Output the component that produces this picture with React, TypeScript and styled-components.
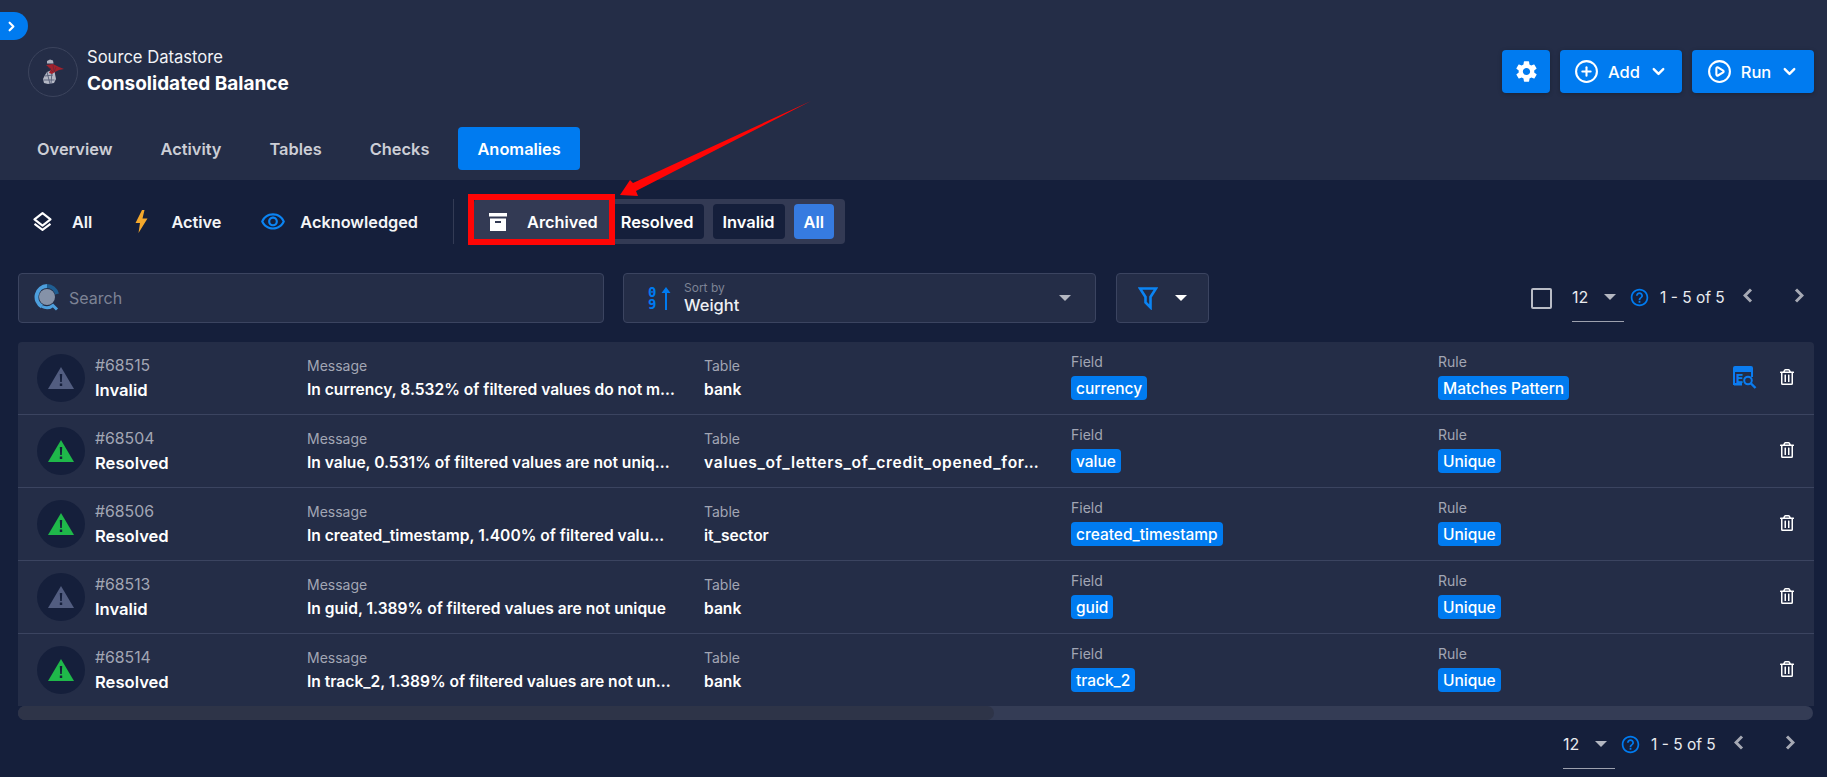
import styled, { createGlobalStyle } from 'styled-components'
import { ChevronDown, ChevronRight, CirclePlay, CirclePlus } from 'lucide-react'
import { FaRegTrashAlt } from 'react-icons/fa'
import { IoMdSettings } from 'react-icons/io'
import { MdOutlineHelpOutline, MdOutlineVisibility } from 'react-icons/md'

const GlobalStyle = createGlobalStyle`
  html, body {
    margin: 0;
    padding: 0;
    background: #151f3b;
    font-family: 'Inter', 'Noto Sans', sans-serif;
    color: #fff;
  }
  * {
    box-sizing: border-box;
  }
`

const SPage = styled.div`
  width: 1827px;
  height: 777px;
  position: relative;
  overflow: hidden;
  background: #151f3b;
`
const SHeader = styled.header`
  height: 180px;
  background: #242d47;
  padding: 12px 13px 0 0;
`
const SToggle = styled.div`
  width: 28px;
  height: 28px;
  background: #007bf0;
  border-radius: 0 14px 14px 0;
  display: flex;
  align-items: center;
  justify-content: center;
  padding-right: 5px;
  color: #fff;
`
const SHeaderTop = styled.div`
  display: flex;
  justify-content: space-between;
  padding-left: 28px;
  margin-top: 7px;
  height: 50px;
`
const SDatastore = styled.div`
  display: flex;
  align-items: center;
  gap: 9px;
`
const SLogo = styled.div`
  width: 50px;
  height: 50px;
  border-radius: 50%;
  border: 1px solid #3c445d;
  display: flex;
  align-items: center;
  justify-content: center;
`
const SSubTitle = styled.div`
  font-size: 16.6px;
  line-height: 20px;
  margin-top: -1px;
  color: #f2f3f6;
`
const STitle = styled.div`
  font-size: 19px;
  line-height: 24px;
  margin-top: 5px;
  font-weight: 700;
`
const SActions = styled.div`
  display: flex;
  gap: 10px;
  margin-top: 3px;
`
const SBlueButton = styled.button<{ $wide?: boolean }>`
  width: ${(p) => (p.$wide ? '122px' : '48px')};
  height: 43px;
  border: 0;
  border-radius: 4px;
  background: #007bf0;
  color: #fff;
  font: 500 16.5px 'Inter', sans-serif;
  display: flex;
  align-items: center;
  justify-content: center;
  gap: 9px;
  padding: 0;
  box-shadow: 0 1px 4px rgba(0, 0, 0, 0.25);
`
const STabs = styled.nav`
  display: flex;
  gap: 10px;
  padding-left: 18px;
  margin-top: 30px;
`
const STab = styled.div<{ $active?: boolean }>`
  height: 43px;
  padding: 0 19px;
  border-radius: 4px;
  display: flex;
  align-items: center;
  font-size: 16.4px;
  font-weight: 600;
  background: ${(p) => (p.$active ? '#007bf0' : 'transparent')};
  color: ${(p) => (p.$active ? '#fff' : '#ccced6')};
`
const SFilterBar = styled.div`
  display: flex;
  align-items: center;
  height: 45px;
  margin-top: 19px;
  padding-left: 33px;
`
const SStateItem = styled.div<{ $after?: number }>`
  display: flex;
  align-items: center;
  font-size: 16.3px;
  font-weight: 600;
  color: #f4f5f7;
  margin-right: ${(p) => p.$after ?? 0}px;
`
const SIconSlot = styled.span<{ $w: number }>`
  width: ${(p) => p.$w}px;
  display: flex;
  align-items: center;
`
const SDivider = styled.div`
  width: 1px;
  height: 45px;
  background: #333b55;
  margin: 0 20px 0 35px;
`
const SGroup = styled.div`
  height: 45px;
  width: 371px;
  padding: 5px 11px 5px 0;
  background: #333a54;
  border-radius: 4px;
  display: flex;
  align-items: center;
  gap: 9px;
`
const SArchived = styled.div`
  width: 136px;
  height: 41px;
  display: flex;
  align-items: center;
  padding-left: 15px;
  font-size: 16.3px;
  font-weight: 600;
  gap: 20px;
  margin-right: -6px;
`
const SStatusTab = styled.div<{ $active?: boolean }>`
  height: 35px;
  padding: 0 10px;
  border-radius: 4px;
  background: ${(p) => (p.$active ? '#367be0' : '#151f3b')};
  display: flex;
  align-items: center;
  font-size: 16.4px;
  font-weight: 600;
`
const SHighlight = styled.div`
  position: absolute;
  left: 468px;
  top: 194px;
  width: 147px;
  height: 51px;
  border: 6px solid #ff0505;
`
const SArrow = styled.svg`
  position: absolute;
  left: 610px;
  top: 95px;
`
const SToolbar = styled.div`
  display: flex;
  align-items: flex-start;
  margin-top: 29px;
  padding-left: 18px;
  height: 50px;
`
const SBox = styled.div<{ $w: number }>`
  width: ${(p) => p.$w}px;
  height: 50px;
  background: #242d47;
  border: 1px solid #3b4460;
  border-radius: 4px;
  display: flex;
  align-items: center;
`
const SSearch = styled(SBox)`
  padding-left: 15px;
  gap: 9px;
  font-size: 16px;
  color: #7d8395;
  margin-right: 19px;
`
const SSort = styled(SBox)`
  padding: 0 24px 0 24px;
  margin-right: 20px;
`
const SSortDigits = styled.span`
  display: flex;
  flex-direction: column;
  font: 700 14px/12px 'DejaVu Sans Mono', monospace;
  color: #007bf0;
  width: 10px;
`
const SSortArrow = styled.svg`
  margin-left: 3px;
`
const SSortText = styled.div`
  flex: 1;
  margin-left: 13px;
`
const SSortLabel = styled.div`
  font-size: 12px;
  line-height: 14px;
  color: #7d8395;
`
const SSortValue = styled.div`
  font-size: 16.5px;
  line-height: 20px;
  font-weight: 500;
  color: #eef0f4;
`
const SCaret = styled.span<{ $color?: string }>`
  width: 0;
  height: 0;
  border-left: 6px solid transparent;
  border-right: 6px solid transparent;
  border-top: 6px solid ${(p) => p.$color ?? '#b4b7c1'};
`
const SFilterBox = styled(SBox)`
  justify-content: center;
  gap: 17px;
`
const SPager = styled.div<{ $bottom?: boolean }>`
  display: flex;
  align-items: center;
  height: 49px;
  margin-left: auto;
  padding-right: ${(p) => (p.$bottom ? '32px' : '23px')};
  font-size: 16px;
  color: #e9ebef;
`
const SCheckbox = styled.span`
  width: 21px;
  height: 21px;
  border: 2px solid #b9bcc6;
  border-radius: 2px;
  margin-right: 20px;
  margin-top: 1px;
`
const SPageSize = styled.div`
  width: 52px;
  height: 49px;
  display: flex;
  align-items: center;
  justify-content: space-between;
  padding-right: 8px;
  border-bottom: 1px solid #9da1ae;
`
const SHelp = styled.span`
  display: flex;
  color: #007bf0;
  margin: 0 10px 0 5px;
`
const SPageText = styled.span`
  width: 64px;
  white-space: nowrap;
  font-size: 15.5px;
`
const SPageNav = styled.div`
  display: flex;
  gap: 41px;
  margin-left: 19px;
  margin-top: -4px;
`
const SCard = styled.section`
  margin: 19px 13px 0 18px;
  background: #242d47;
  border-radius: 4px 4px 0 0;
`
const SRow = styled.div`
  height: 73px;
  display: grid;
  grid-template-columns: 270px 397px 367px 367px 200px 1fr;
  align-items: center;
  padding-left: 19px;
  border-bottom: 1px solid #3b4460;
  &:last-child {
    height: 72px;
    border-bottom: 0;
  }
`
const SStatusCell = styled.div`
  display: flex;
  align-items: center;
  gap: 10px;
`
const SStatusBadge = styled.div`
  width: 48px;
  height: 48px;
  border-radius: 50%;
  background: #151f3b;
  display: flex;
  align-items: center;
  justify-content: center;
`
const SCell = styled.div`
  min-width: 0;
`
const SLabel = styled.div<{ $big?: boolean }>`
  font-size: ${(p) => (p.$big ? '15.8px' : '14px')};
  line-height: 18px;
  color: #a2a6b4;
`
const SValue = styled.div<{ $big?: boolean; $track?: number }>`
  font-size: ${(p) => (p.$big ? '16.6px' : '15.6px')};
  line-height: 20px;
  font-weight: 600;
  margin-top: 5px;
  color: #fff;
  letter-spacing: ${(p) => p.$track ?? 0}px;
  white-space: nowrap;
`
const STag = styled.div`
  display: flex;
  width: fit-content;
  align-items: center;
  height: 24px;
  padding: 0 5px;
  border-radius: 4px;
  background: #007bf0;
  font-size: 15.5px;
  font-weight: 500;
  color: #fff;
  margin: 5px 0 3px;
`
const SRowActions = styled.div`
  display: flex;
  align-items: center;
  justify-content: flex-end;
  gap: 22px;
  padding-right: 19px;
  margin-top: -2px;
  color: #fff;
`
const SScrollbar = styled.div`
  margin: 0 14px 0 18px;
  height: 14px;
  border-radius: 7px;
  background: #343c55;
`
const SScrollThumb = styled.div`
  width: 976px;
  height: 14px;
  border-radius: 7px;
  background: #2e3448;
`
const SFooter = styled.div`
  display: flex;
  height: 50px;
`

const SqlServerLogo = () => (
  <svg width="22" height="26" viewBox="0 0 22 26">
    <path d="M5 2l3-1.5 3 1 .5 3H5z" fill="#aeb2bf" />
    <path d="M5 13l7-3 1 5 1 5-2 4-6 1-4-1-1-4 2-4z" fill="#b4b8c5" />
    <path d="M3 17l8-1M1.500 21l11 0M5 13l3 12M10 12l-1 13" stroke="#555c76" strokeWidth="0.9" />
    <path d="M4 6l7-1 6 3 5 2-5 1-4 2-3 2-3-1 2-4z" fill="#a3212c" />
    <path d="M6 8l5 5M11 6l1 6M14 8l-2 5" stroke="#5a2a3c" strokeWidth="0.6" />
  </svg>
)

const LayersIcon = () => (
  <svg width="19" height="19" viewBox="0 0 19 19" fill="none" stroke="#fff" strokeWidth="2.1" strokeLinejoin="round">
    <path d="M9.500 1.200l8 6.200-8 6.200-8-6.200z" />
    <path d="M1.500 11.800l8 6 8-6" />
  </svg>
)

const BoltIcon = () => (
  <svg width="13" height="23" viewBox="0 0 13 23">
    <path d="M7 0L.5 13H5L3.500 23 12.500 8.500H7.500L9.500 0z" fill="#f4a82c" />
  </svg>
)

const ArchiveIcon = () => (
  <svg width="18" height="18" viewBox="0 0 18 18">
    <path d="M0 0h18v3.500H0z" fill="#fff" />
    <path d="M1 5.500h16V18H1zM6 8v2h6V8z" fill="#fff" fillRule="evenodd" />
  </svg>
)

const SearchIcon = () => (
  <svg width="26" height="30" viewBox="0 0 26 30" fill="none">
    <circle cx="13" cy="14" r="8" fill="#8592a8" />
    <path d="M8 23.500A11 11 0 0 1 13 3" stroke="#4d9fdd" strokeWidth="4" />
    <path d="M13 3a11 11 0 0 1 10 8" stroke="#1f5e92" strokeWidth="4" />
    <path d="M8 23.500c4 2 8 1.500 11-1l4 4" stroke="#4d9fdd" strokeWidth="3" />
  </svg>
)

const FunnelIcon = () => (
  <svg width="20" height="23" viewBox="0 0 20 23" fill="none" stroke="#0b84f3" strokeWidth="2.6" strokeLinejoin="miter">
    <path d="M2 1.500h16l-5.500 8.500v10.500l-5-5V10z" />
  </svg>
)

const WarningIcon = ({ color }: { color: string }) => (
  <svg width="26" height="22" viewBox="0 0 26 22">
    <path d="M13 0l13 22H0z" fill={color} />
    <path d="M11.800 7h2.400l-.4 8h-1.600zM11.800 16.500h2.400V19h-2.400z" fill="#151f3b" />
  </svg>
)

const EqSearchIcon = () => (
  <svg width="24" height="23" viewBox="0 0 24 23" fill="none">
    <path d="M1 19V2a1 1 0 0 1 1-1h16a1 1 0 0 1 1 1v9" stroke="#0b7cf0" strokeWidth="2" />
    <path d="M1 1h18v5H1zM1 17h8v2.500H1z" fill="#0b7cf0" />
    <text x="3" y="17" fontSize="12" fontWeight="800" fontFamily="Inter, sans-serif" fill="#0b7cf0">
      E
    </text>
    <circle cx="15" cy="14.500" r="3.800" fill="#242d47" stroke="#0b7cf0" strokeWidth="2" />
    <path d="M18 17.500l4.500 4.500" stroke="#0b7cf0" strokeWidth="2.400" />
  </svg>
)

const PageChevron = ({ flip }: { flip?: boolean }) => (
  <svg width="10" height="15" viewBox="0 0 10 15" fill="none" stroke="#a6a9b4" strokeWidth="3">
    <path d={flip ? 'M2 1.500l6 6-6 6' : 'M8 1.500l-6 6 6 6'} />
  </svg>
)

const rows = [
  { id: '#68515', status: 'Invalid', message: 'In currency, 8.532% of filtered values do not m…', table: 'bank', field: 'currency', rule: 'Matches Pattern', eq: true },
  { id: '#68504', status: 'Resolved', message: 'In value, 0.531% of filtered values are not uniq…', table: 'values_of_letters_of_credit_opened_for…', field: 'value', rule: 'Unique', track: 0.7 },
  { id: '#68506', status: 'Resolved', message: 'In created_timestamp, 1.400% of filtered valu…', table: 'it_sector', field: 'created_timestamp', rule: 'Unique' },
  { id: '#68513', status: 'Invalid', message: 'In guid, 1.389% of filtered values are not unique', table: 'bank', field: 'guid', rule: 'Unique' },
  { id: '#68514', status: 'Resolved', message: 'In track_2, 1.389% of filtered values are not un…', table: 'bank', field: 'track_2', rule: 'Unique' },
]

const Pager = ({ bottom }: { bottom?: boolean }) => (
  <SPager $bottom={bottom}>
    {!bottom && <SCheckbox />}
    <SPageSize>
      12
      <SCaret />
    </SPageSize>
    <SHelp>
      <MdOutlineHelpOutline size={21} />
    </SHelp>
    <SPageText>1 - 5 of 5</SPageText>
    <SPageNav>
      <PageChevron />
      <PageChevron flip />
    </SPageNav>
  </SPager>
)

const App = () => {
  return (
    <SPage>
      <GlobalStyle />
      <SHeader>
        <SToggle>
          <ChevronRight size={15} strokeWidth={3.5} />
        </SToggle>
        <SHeaderTop>
          <SDatastore>
            <SLogo>
              <SqlServerLogo />
            </SLogo>
            <div>
              <SSubTitle>Source Datastore</SSubTitle>
              <STitle>Consolidated Balance</STitle>
            </div>
          </SDatastore>
          <SActions>
            <SBlueButton>
              <IoMdSettings size={25} />
            </SBlueButton>
            <SBlueButton $wide>
              <CirclePlus size={25} />
              Add
              <ChevronDown size={19} strokeWidth={3} />
            </SBlueButton>
            <SBlueButton $wide>
              <CirclePlay size={25} />
              Run
              <ChevronDown size={19} strokeWidth={3} />
            </SBlueButton>
          </SActions>
        </SHeaderTop>
        <STabs>
          <STab>Overview</STab>
          <STab>Activity</STab>
          <STab>Tables</STab>
          <STab>Checks</STab>
          <STab $active>Anomalies</STab>
        </STabs>
      </SHeader>

      <SFilterBar>
        <SStateItem $after={43}>
          <SIconSlot $w={39}>
            <LayersIcon />
          </SIconSlot>
          All
        </SStateItem>
        <SStateItem $after={39}>
          <SIconSlot $w={36}>
            <BoltIcon />
          </SIconSlot>
          Active
        </SStateItem>
        <SStateItem>
          <SIconSlot $w={40}>
            <MdOutlineVisibility size={26} color="#0b84f3" />
          </SIconSlot>
          Acknowledged
        </SStateItem>
        <SDivider />
        <SGroup>
          <SArchived>
            <ArchiveIcon />
            Archived
          </SArchived>
          <SStatusTab>Resolved</SStatusTab>
          <SStatusTab>Invalid</SStatusTab>
          <SStatusTab $active>All</SStatusTab>
        </SGroup>
      </SFilterBar>

      <SToolbar>
        <SSearch $w={586}>
          <SearchIcon />
          Search
        </SSearch>
        <SSort $w={473}>
          <SSortDigits>
            <span>0</span>
            <span>9</span>
          </SSortDigits>
          <SSortArrow width="10" height="23" viewBox="0 0 10 23">
            <path d="M5 0l4.500 6H6v17H4V6H.5z" fill="#007bf0" />
          </SSortArrow>
          <SSortText>
            <SSortLabel>Sort by</SSortLabel>
            <SSortValue>Weight</SSortValue>
          </SSortText>
          <SCaret />
        </SSort>
        <SFilterBox $w={93}>
          <FunnelIcon />
          <SCaret $color="#fff" />
        </SFilterBox>
        <Pager />
      </SToolbar>

      <SCard>
        {rows.map((r) => (
          <SRow key={r.id}>
            <SStatusCell>
              <SStatusBadge>
                <WarningIcon color={r.status === 'Invalid' ? '#525d80' : '#1fb84a'} />
              </SStatusBadge>
              <SCell>
                <SLabel $big>{r.id}</SLabel>
                <SValue $big>{r.status}</SValue>
              </SCell>
            </SStatusCell>
            <SCell>
              <SLabel>Message</SLabel>
              <SValue>{r.message}</SValue>
            </SCell>
            <SCell>
              <SLabel>Table</SLabel>
              <SValue $track={r.track}>{r.table}</SValue>
            </SCell>
            <SCell>
              <SLabel>Field</SLabel>
              <STag>{r.field}</STag>
            </SCell>
            <SCell>
              <SLabel>Rule</SLabel>
              <STag>{r.rule}</STag>
            </SCell>
            <SRowActions>
              {r.eq && <EqSearchIcon />}
              <FaRegTrashAlt size={16} />
            </SRowActions>
          </SRow>
        ))}
      </SCard>
      <SScrollbar>
        <SScrollThumb />
      </SScrollbar>
      <SFooter>
        <Pager bottom />
      </SFooter>

      <SHighlight />
      <SArrow width="210" height="110" viewBox="0 0 210 110">
        <path d="M10 100L20 85 23 88 201 6 26 96 28 101z" fill="#ff0505" />
      </SArrow>
    </SPage>
  )
}

export default App
